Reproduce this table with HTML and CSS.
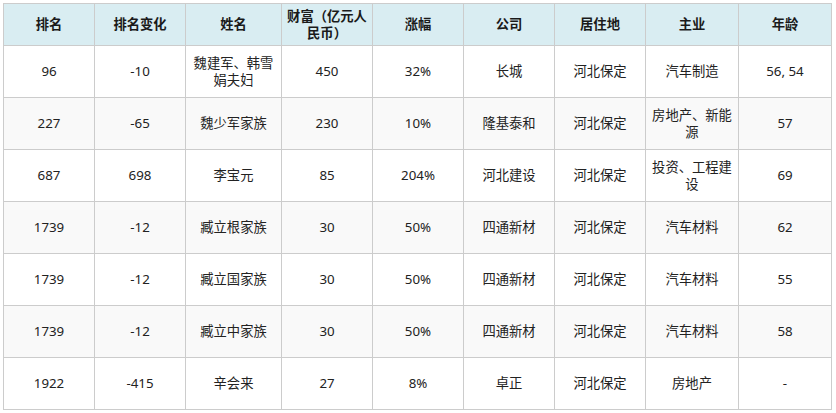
FILE: index.html
```html
<!DOCTYPE html>
<html lang="zh-CN">
<head>
<meta charset="utf-8">
<title>富豪榜</title>
<link rel="stylesheet" href="styles.css">
</head>
<body>
<table class="rich">
  <colgroup>
    <col class="c1"><col class="c2"><col class="c3"><col class="c4"><col class="c5"><col class="c6"><col class="c7"><col class="c8"><col class="c9">
  </colgroup>
  <thead>
    <tr>
      <th>排名</th><th>排名变化</th><th>姓名</th><th>财富（亿元人民币）</th><th>涨幅</th><th>公司</th><th>居住地</th><th>主业</th><th>年龄</th>
    </tr>
  </thead>
  <tbody>
    <tr><td>96</td><td>-10</td><td>魏建军、韩雪娟夫妇</td><td>450</td><td>32%</td><td>长城</td><td>河北保定</td><td>汽车制造</td><td>56, 54</td></tr>
    <tr><td>227</td><td>-65</td><td>魏少军家族</td><td>230</td><td>10%</td><td>隆基泰和</td><td>河北保定</td><td>房地产、新能源</td><td>57</td></tr>
    <tr><td>687</td><td>698</td><td>李宝元</td><td>85</td><td>204%</td><td>河北建设</td><td>河北保定</td><td>投资、工程建设</td><td>69</td></tr>
    <tr><td>1739</td><td>-12</td><td>臧立根家族</td><td>30</td><td>50%</td><td>四通新材</td><td>河北保定</td><td>汽车材料</td><td>62</td></tr>
    <tr><td>1739</td><td>-12</td><td>臧立国家族</td><td>30</td><td>50%</td><td>四通新材</td><td>河北保定</td><td>汽车材料</td><td>55</td></tr>
    <tr><td>1739</td><td>-12</td><td>臧立中家族</td><td>30</td><td>50%</td><td>四通新材</td><td>河北保定</td><td>汽车材料</td><td>58</td></tr>
    <tr><td>1922</td><td>-415</td><td>辛会来</td><td>27</td><td>8%</td><td>卓正</td><td>河北保定</td><td>房地产</td><td>-</td></tr>
  </tbody>
</table>
</body>
</html>
```

FILE: styles.css
```css
html, body {
  margin: 0;
  padding: 0;
  background: #ffffff;
}
body {
  padding: 3px;
  font-family: "Noto Sans", "Noto Sans CJK SC", sans-serif;
  font-size: 13.3px;
  color: #222222;
}
.rich {
  border-collapse: collapse;
  table-layout: fixed;
  width: 828px;
}
.c1 { width: 91px; }
.c2 { width: 91px; }
.c3 { width: 96px; }
.c4 { width: 91px; }
.c5 { width: 91px; }
.c6 { width: 91px; }
.c7 { width: 91px; }
.c8 { width: 93px; }
.c9 { width: 93px; }
.rich th,
.rich td {
  border: 1px solid #cccccc;
  padding: 0 6px;
  text-align: center;
  vertical-align: middle;
  line-height: 17px;
}
.rich thead tr {
  height: 42px;
}
.rich th {
  padding: 0 4px;
  background: #d9edf2;
  font-weight: bold;
  color: #1a1a1a;
}
.rich tbody tr {
  height: 52px;
}
.rich tbody tr:nth-child(even) td {
  background: #f9f9f9;
}
```
